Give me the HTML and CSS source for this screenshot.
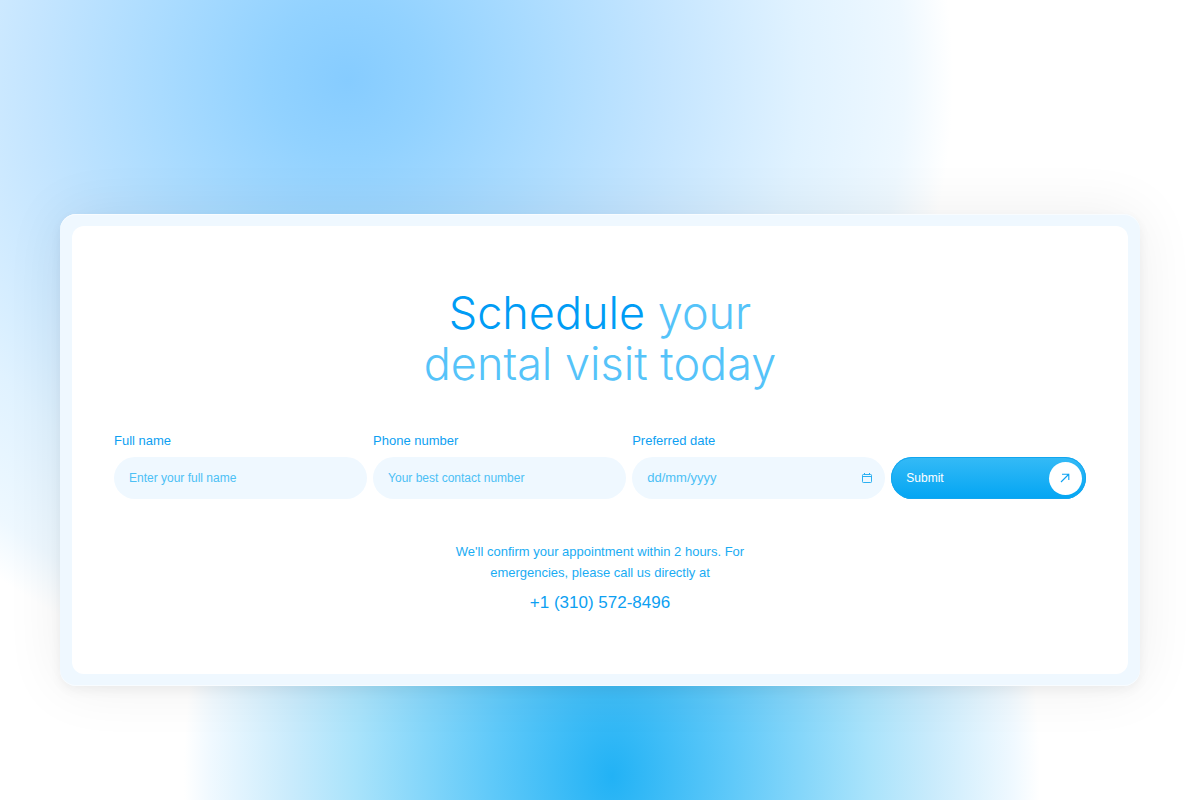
FILE: index.html
```html
<!DOCTYPE html>
<html lang="en">
<head>
<meta charset="utf-8">
<meta name="viewport" content="width=device-width, initial-scale=1">
<title>Schedule your dental visit</title>
<link rel="stylesheet" href="styles.css">
</head>
<body>
<main class="page">
  <section class="frame">
    <div class="card">
      <h1 class="title"><span class="title-strong">Schedule</span> your<br>dental visit today</h1>
      <form class="booking">
        <div class="field">
          <label class="label" for="name">Full name</label>
          <input class="input" id="name" type="text" placeholder="Enter your full name">
        </div>
        <div class="field">
          <label class="label" for="phone">Phone number</label>
          <input class="input" id="phone" type="tel" placeholder="Your best contact number">
        </div>
        <div class="field">
          <label class="label" for="date">Preferred date</label>
          <div class="input date">
            <input class="date-text" id="date" type="text" inputmode="numeric" placeholder="dd/mm/yyyy">
            <button class="date-button" type="button" aria-label="Open calendar">
              <svg width="12" height="12" viewBox="0 0 12 12" fill="none" stroke="currentColor"><rect x="1.5" y="2.5" width="9" height="8" rx=".8"/><path d="M1.5 4.5h9M3.5 1v1.5M8.5 1v1.5"/></svg>
            </button>
          </div>
        </div>
        <button class="submit" type="submit">
          <span>Submit</span>
          <span class="submit-icon">
            <svg width="12" height="12" viewBox="0 0 12 12" fill="none" stroke="currentColor" stroke-width="1.1"><path d="M2 10 10 2M3 2.2H9.8V8"/></svg>
          </span>
        </button>
      </form>
      <p class="note">We'll confirm your appointment within 2 hours. For emergencies, please call us directly at</p>
      <a class="phone" href="tel:+13105728496">+1 (310) 572-8496</a>
    </div>
  </section>
</main>
</body>
</html>
```
FILE: styles.css
```css
* { box-sizing: border-box; }

body {
  margin: 0;
  font-family: "Liberation Sans", Arial, sans-serif;
  color: #0d9ff2;
}

.page {
  min-height: 100vh;
  display: flex;
  align-items: center;
  padding: 100px 60px 0;
  background:
    radial-gradient(ellipse 428px 600px at 51% 85%, #22b2f5 0%, #5fc9f9 28%, #a9e3fb 60%, #c9ebfc 75%, #f0f9ff 94%, #fff 100%) bottom / 100% 20% no-repeat,
    radial-gradient(ellipse 605px 610px at 29% 10%, #86ccff 0%, #92d2ff 13%, #a9dbff 31%, #c4e5ff 52%, #e0f2ff 75%, #eef8ff 92%, #fff 100%);
}

.frame {
  flex: 1;
  padding: 12px;
  border-radius: 16px;
  background: #eff8ff;
  box-shadow: 0 4px 12px rgba(0, 0, 0, 0.05), 0 0 60px rgba(0, 0, 0, 0.07), inset 0 1px 0 #f8fcff, inset 0 -1px 0 #f8fcff;
}

.card {
  display: flex;
  flex-direction: column;
  align-items: center;
  padding: 61px 42px 57px;
  border-radius: 12px;
  background: #fff;
  text-align: center;
}

.title {
  margin: 0 0 42px;
  font-family: Inter, "Liberation Sans", sans-serif;
  font-size: 45px;
  line-height: 51px;
  font-weight: 300;
  color: #55c3f9;
}

.title-strong { color: #009cf5; }

.booking {
  align-self: stretch;
  display: grid;
  grid-template-columns: repeat(3, 13fr) 10fr;
  gap: 6px;
  align-items: end;
  text-align: left;
}

.field {
  display: flex;
  flex-direction: column;
  gap: 6px;
  min-width: 0;
}

.label {
  font-size: 13px;
  line-height: 20px;
}

.input {
  width: 100%;
  height: 42px;
  padding: 0 15px;
  border: 0;
  border-radius: 21px;
  background: #eff8ff;
  font: 12px/18px "Liberation Sans", Arial, sans-serif;
  color: #0d9ff2;
}

.input::placeholder,
.date-text::placeholder { color: #4cc0f5; opacity: 1; }

.date {
  display: flex;
  align-items: center;
  padding-right: 12px;
}

.date-text {
  flex: 1;
  min-width: 0;
  padding: 0;
  border: 0;
  background: none;
  font: inherit;
  font-size: 13px;
  color: inherit;
}

.date-button {
  display: flex;
  padding: 0;
  border: 0;
  background: none;
  color: #2bb0f2;
}

.submit {
  display: flex;
  align-items: center;
  justify-content: space-between;
  height: 42px;
  padding: 0 4px 0 15px;
  border: 0;
  border-radius: 21px;
  background: linear-gradient(#35baf6, #03a5f3);
  box-shadow: inset 0 0 0 1px #12a6ef;
  font: 12px/18px "Liberation Sans", Arial, sans-serif;
  color: #fff;
}

.submit-icon {
  display: flex;
  align-items: center;
  justify-content: center;
  width: 33px;
  height: 33px;
  border-radius: 50%;
  background: #fff;
  color: #0da2f2;
}

.note {
  max-width: 310px;
  margin: 42px 0 6px;
  font-size: 13px;
  line-height: 21px;
  color: #1aacf3;
}

.phone {
  font-size: 17px;
  line-height: 28px;
  color: #0d9ff2;
  text-decoration: none;
}
```
